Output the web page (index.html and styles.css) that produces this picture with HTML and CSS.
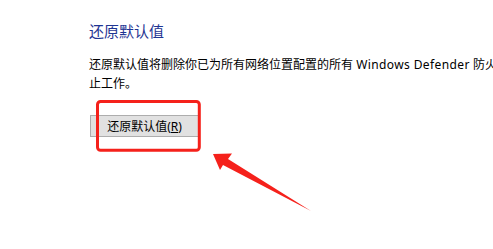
FILE: index.html
```html
<!DOCTYPE html>
<html lang="zh-CN">
<head>
<meta charset="utf-8">
<link rel="stylesheet" href="styles.css">
</head>
<body>
<main class="page">
  <h1 class="title">还原默认值</h1>
  <p class="desc"><span class="line">还原默认值将删除你已为所有网络位置配置的所有 <span class="latin">Windows Defender</span> 防火墙设置。</span><br>止工作。</p>
  <button class="btn" type="button">还原默认值(<u>R</u>)</button>
</main>
<svg class="annot" width="493" height="249" viewBox="0 0 493 249" aria-hidden="true">
  <rect x="97.5" y="101.5" width="101.8" height="48.8" rx="3" ry="3" fill="none" stroke="#f5211b" stroke-width="3"/>
  <polygon points="213,154 232,153.5 228,159 311,211 223,165 220,170" fill="#f5211b"/>
</svg>
</body>
</html>
```
FILE: styles.css
```css
html, body {
  margin: 0;
  padding: 0;
  background: #ffffff;
  overflow: hidden;
}
body {
  width: 493px;
  height: 249px;
  position: relative;
  font-family: "Noto Sans", "Noto Sans CJK SC", sans-serif;
}
.page {
  padding: 21px 0 0 89px;
}
.title {
  margin: 0;
  font-size: 15px;
  line-height: 20px;
  font-weight: normal;
  color: #1f3593;
}
.desc {
  margin: 15px 0 0 0;
  font-size: 12px;
  line-height: 18.5px;
  color: #000;
  white-space: nowrap;
}
.latin {
  letter-spacing: 0.4px;
}
.btn {
  display: block;
  margin: 22px 0 0 1px;
  width: 109px;
  height: 22px;
  padding: 0;
  border: 1px solid #adadad;
  background: #e1e1e1;
  font-family: "Noto Sans", "Noto Sans CJK SC", sans-serif;
  font-size: 12px;
  color: #000;
  text-align: center;
}
.btn u {
  text-decoration-thickness: 1px;
}
.annot {
  position: absolute;
  left: 0;
  top: 0;
  pointer-events: none;
}
```
